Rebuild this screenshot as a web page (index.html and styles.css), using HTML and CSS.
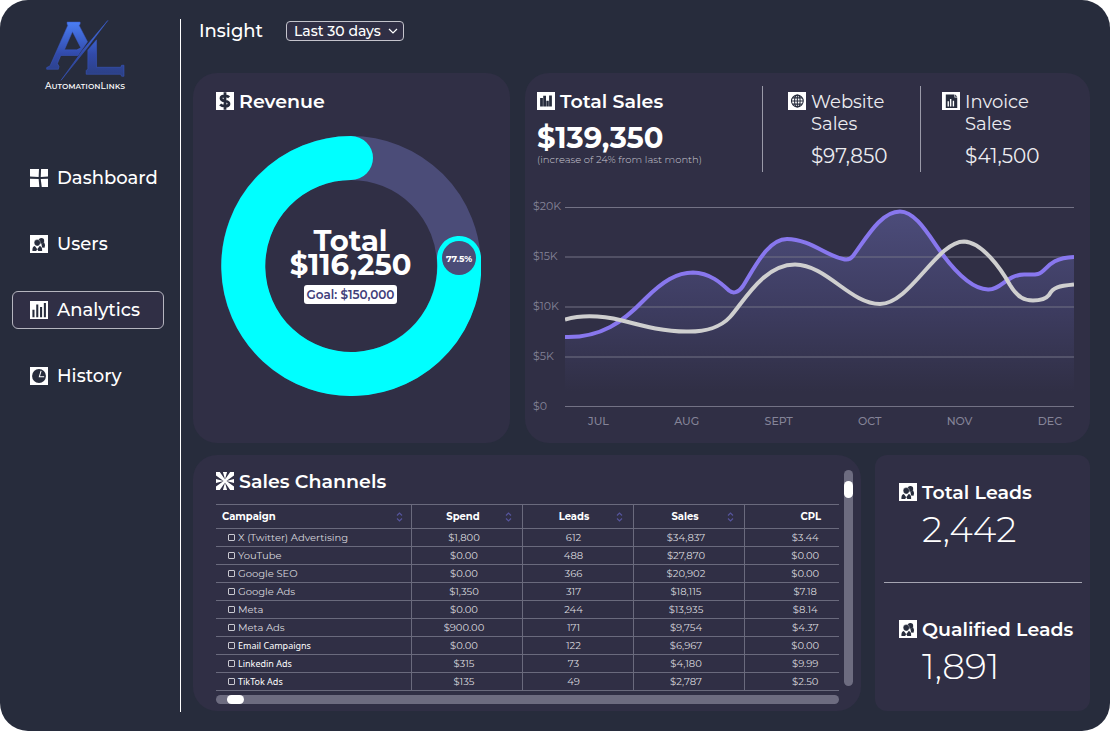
FILE: index.html
```html
<!DOCTYPE html>
<html lang="en">
<head>
<meta charset="utf-8">
<meta name="viewport" content="width=device-width, initial-scale=1">
<title>AutomationLinks Analytics</title>
<link rel="stylesheet" href="styles.css">
</head>
<body>
<svg class="sprite" aria-hidden="true">
  <symbol id="i-dashboard" viewBox="0 0 52 52"><path fill="#fff" d="M0 0H26L25 23 0 22ZM32 0H52V22L31 23ZM0 28L25 29 27 52H0ZM31 29L52 28V52H34Z"/></symbol>
  <symbol id="i-users" viewBox="0 0 52 52"><path fill="#fff" d="M0 0H52V52H0Z"/><g fill="#272c3c"><circle cx="33" cy="17" r="8"/><path d="M33 25L41 22Q46 30 42 37L35 36Z"/><path stroke="#fff" stroke-width="1" d="M21 13a9 9 0 0 1 9 9c0 6-4 10-9 10s-9-4-9-10a9 9 0 0 1 9-9Z"/><path d="M7 46Q6 34 14 32L21 41 28 32Q36 34 35 46H24L21 40 18 46Z"/></g></symbol>
  <symbol id="i-analytics" viewBox="0 0 52 52"><path fill="#fff" d="M0 0H52V52H0Z"/><path fill="#272c3c" d="M7 25h6v22H7ZM18 10h6v37H18ZM29 17h6v30H29ZM40 6h6v41H40Z"/></symbol>
  <symbol id="i-history" viewBox="0 0 52 52"><path fill="#fff" d="M0 0H52V52H0Z"/><circle cx="26" cy="26" r="20" fill="#272c3c"/><path d="M32 11L27 28H41" fill="none" stroke="#fff" stroke-width="3"/></symbol>
  <symbol id="i-dollar" viewBox="0 0 52 52"><path fill="#fff" d="M0 0H52V52H0Z"/><path d="M38 15Q34 11 26 11C10 11 11 24 26 26 42 28 41 41 26 41Q17 41 12 36M26 1V51" fill="none" stroke="#272c3c" stroke-width="8"/></symbol>
  <symbol id="i-bars" viewBox="0 0 52 52"><path fill="#fff" d="M0 0H52V52H0Z"/><path fill="#272c3c" d="M9 17h8v25H9ZM18 11h8v31H18ZM27 25h7v17H27ZM35 10h8v32H35Z"/></symbol>
  <symbol id="i-globe" viewBox="0 0 52 52"><path fill="#fff" d="M0 0H52V52H0Z"/><g fill="none" stroke="#272c3c" stroke-width="3"><circle cx="27" cy="26" r="17"/><ellipse cx="27" cy="26" rx="8" ry="17"/><path d="M27 9V43M10 26H44M13 17H41M13 35H41"/></g></symbol>
  <symbol id="i-invoice" viewBox="0 0 52 52"><path fill="#fff" d="M0 0H52V52H0Z"/><path fill="#272c3c" d="M11 7H36V16H44V46H11Z"/><path fill="#272c3c" d="M38 7L44 14H38Z"/><path fill="#fff" d="M16 27h4v15h-4ZM23 20h4v22h-4ZM31 25h4v17h-4Z"/></symbol>
  <symbol id="i-channels" viewBox="0 0 52 52"><path fill="#fff" d="M0 0H52V52H0Z"/><path fill="#302f45" d="M11 0H20L26 22ZM32 0H41L26 22ZM11 52H20L26 30ZM32 52H41L26 30ZM0 10V20L22 26ZM0 32V42L22 26ZM52 10V20L30 26ZM52 32V42L30 26Z"/></symbol>
  <symbol id="i-sort" viewBox="0 0 7 10"><path d="M1 3.500L3.500 1 6 3.500M1 6.500L3.500 9 6 6.500" fill="none" stroke="#55549c" stroke-width="1.200"/></symbol>
</svg>

<div class="app">
  <aside class="sidebar">
    <div class="brand">
      <svg class="brand-mark" viewBox="138 60 236 182" role="img" aria-label="AutomationLinks logo">
        <defs><linearGradient id="mark" gradientUnits="userSpaceOnUse" x1="0" y1="62" x2="0" y2="232"><stop offset="0" stop-color="#4b80f8"/><stop offset=".6" stop-color="#3149a8"/><stop offset="1" stop-color="#2b3f80"/></linearGradient></defs>
        <g fill="url(#mark)" stroke="#3a5bcb" stroke-width="1.500">
          <path fill-rule="evenodd" d="M201 66H240V72L237 76 262 125 233 166H182L172 190 177 199 175 207H140V202L150 197 203 76 201 72ZM217 95L193 149H230L242 143Z"/>
          <path d="M323 61L262 142 183 240 247 151Z"/>
          <path d="M289 119V201H361L364 195H371V228H364L361 222H258V211L263 206V150Z"/>
        </g>
      </svg>
      <span class="brand-name">AutomationLinks</span>
    </div>
    <nav class="nav" aria-label="Main">
      <a class="nav-item" href="#dashboard"><svg class="icon"><use href="#i-dashboard"/></svg>Dashboard</a>
      <a class="nav-item" href="#users"><svg class="icon"><use href="#i-users"/></svg>Users</a>
      <a class="nav-item active" href="#analytics" aria-current="page"><svg class="icon"><use href="#i-analytics"/></svg>Analytics</a>
      <a class="nav-item" href="#history"><svg class="icon"><use href="#i-history"/></svg>History</a>
    </nav>
  </aside>

  <main class="main">
    <header class="topbar">
      <label class="page-title" for="range">Insight</label>
      <span class="range">
        <select id="range"><option>Last 30 days</option><option>Last 90 days</option></select>
        <svg class="chevron" viewBox="0 0 10 8" aria-hidden="true"><path d="M1 2L5 6 9 2" fill="none" stroke="#fff" stroke-width="1.200"/></svg>
      </span>
    </header>

    <div class="row row-top">
      <section class="panel revenue">
        <h2 class="title"><svg class="icon"><use href="#i-dollar"/></svg>Revenue</h2>
        <div class="donut">
          <svg viewBox="0 0 260 260" role="img" aria-label="77.5% of the revenue goal">
            <circle cx="130" cy="130" r="108" fill="none" stroke="#4b4c78" stroke-width="44"/>
            <path d="M238 122A108 108 0 1 1 130 22" fill="none" stroke="#0ff" stroke-width="44" stroke-linecap="round"/>
            <circle cx="238" cy="122" r="17" fill="#4b4c78"/>
            <text class="donut-badge" x="238" y="126" text-anchor="middle">77.5%</text>
          </svg>
          <div class="donut-center">
            <p class="donut-total">Total<br>$116,250</p>
            <span class="goal">Goal: $150,000</span>
          </div>
        </div>
      </section>

      <section class="panel sales">
        <div class="stats">
          <div class="stat-main">
            <h2 class="title"><svg class="icon"><use href="#i-bars"/></svg>Total Sales</h2>
            <strong class="total">$139,350</strong>
            <small class="note">(increase of 24% from last month)</small>
          </div>
          <div class="stat stat-web">
            <svg class="icon"><use href="#i-globe"/></svg>
            <div><h3>Website Sales</h3><p>$97,850</p></div>
          </div>
          <div class="stat stat-inv">
            <svg class="icon"><use href="#i-invoice"/></svg>
            <div><h3>Invoice Sales</h3><p>$41,500</p></div>
          </div>
        </div>
        <div class="chart">
          <div class="y-axis"><span>$20K</span><span>$15K</span><span>$10K</span><span>$5K</span><span>$0</span></div>
          <svg class="plot" viewBox="0 0 509 200" role="img" aria-label="Sales from July to December">
            <defs><linearGradient id="fill" x1="0" y1="0" x2="0" y2="1"><stop offset="0" stop-color="#4c4c7a"/><stop offset=".5" stop-color="#3d3c60"/><stop offset=".92" stop-color="#302f45"/></linearGradient></defs>
            <path fill="url(#fill)" d="M0 130C36 131 58 115 80 92C98 74 112 65.500 128 65.500C145 66 156 76 164 83.500C168 87 173 86 178 79C190 60 203 32 222 32C244 32 262 49 278 52C282 53 285 53 288 49C302 30 316 4.500 335 4.500C351 4.500 364 29 378 48C390 64 407 82 423 82.500C436 83 441 68 459 67.500C464 67.500 469 68 473 67C482 65 482 51 509 50V200H0Z"/>
            <path d="M0 .5H509M0 50H509M0 100H509M0 150H509M0 199.500H509" stroke="#737285" stroke-width="1"/>
            <g fill="none" stroke-width="4">
              <path stroke="#8877ee" d="M0 130C36 131 58 115 80 92C98 74 112 65.500 128 65.500C145 66 156 76 164 83.500C168 87 173 86 178 79C190 60 203 32 222 32C244 32 262 49 278 52C282 53 285 53 288 49C302 30 316 4.500 335 4.500C351 4.500 364 29 378 48C390 64 407 82 423 82.500C436 83 441 68 459 67.500C464 67.500 469 68 473 67C482 65 482 51 509 50"/>
              <path stroke="#cfcfcf" d="M0 112.500C20 107 38 109 57 113.500C78 119 100 125 124 124.500C140 124.500 156 120 165 110C178 96 198 57.500 230 57.500C262 58 285 97 315 97C345 97 372 34.500 399 34.500C417 35 436 62 445 78C453 91 460 93.500 468 93.500C474 93.500 480 93 484 88C488 80 494 79 509 77.500"/>
            </g>
          </svg>
          <div class="x-axis"><span>JUL</span><span>AUG</span><span>SEPT</span><span>OCT</span><span>NOV</span><span>DEC</span></div>
        </div>
      </section>
    </div>

    <div class="row row-bottom">
      <section class="panel channels">
        <div class="channels-body">
          <h2 class="title"><svg class="icon"><use href="#i-channels"/></svg>Sales Channels</h2>
          <table class="table">
            <colgroup><col class="c-name"><col class="c-num"><col class="c-num"><col class="c-num"><col class="c-last"></colgroup>
            <thead><tr>
              <th scope="col"><button class="sort sort-first">Campaign<svg><use href="#i-sort"/></svg></button></th>
              <th scope="col"><button class="sort"><span>Spend</span><svg><use href="#i-sort"/></svg></button></th>
              <th scope="col"><button class="sort"><span>Leads</span><svg><use href="#i-sort"/></svg></button></th>
              <th scope="col"><button class="sort"><span>Sales</span><svg><use href="#i-sort"/></svg></button></th>
              <th scope="col" class="cpl">CPL</th>
            </tr></thead>
            <tbody>
              <tr><td><label><input type="checkbox">X (Twitter) Advertising</label></td><td>$1,800</td><td>612</td><td>$34,837</td><td>$3.44</td></tr>
              <tr><td><label><input type="checkbox">YouTube</label></td><td>$0.00</td><td>488</td><td>$27,870</td><td>$0.00</td></tr>
              <tr><td><label><input type="checkbox">Google SEO</label></td><td>$0.00</td><td>366</td><td>$20,902</td><td>$0.00</td></tr>
              <tr><td><label><input type="checkbox">Google Ads</label></td><td>$1,350</td><td>317</td><td>$18,115</td><td>$7.18</td></tr>
              <tr><td><label><input type="checkbox">Meta</label></td><td>$0.00</td><td>244</td><td>$13,935</td><td>$8.14</td></tr>
              <tr><td><label><input type="checkbox">Meta Ads</label></td><td>$900.00</td><td>171</td><td>$9,754</td><td>$4.37</td></tr>
              <tr><td><label class="alt"><input type="checkbox">Email Campaigns</label></td><td>$0.00</td><td>122</td><td>$6,967</td><td>$0.00</td></tr>
              <tr><td><label class="alt"><input type="checkbox">Linkedin Ads</label></td><td>$315</td><td>73</td><td>$4,180</td><td>$9.99</td></tr>
              <tr><td><label class="alt"><input type="checkbox">TikTok Ads</label></td><td>$135</td><td>49</td><td>$2,787</td><td>$2.50</td></tr>
            </tbody>
          </table>
          <div class="track track-x"><div class="thumb"></div></div>
        </div>
        <div class="track track-y"><div class="thumb"></div></div>
      </section>

      <section class="panel leads">
        <div class="lead">
          <h2 class="title"><svg class="icon"><use href="#i-users"/></svg>Total Leads</h2>
          <p>2,442</p>
        </div>
        <hr>
        <div class="lead">
          <h2 class="title"><svg class="icon"><use href="#i-users"/></svg>Qualified Leads</h2>
          <p>1,891</p>
        </div>
      </section>
    </div>
  </main>
</div>
</body>
</html>
```
FILE: styles.css
```css
* { box-sizing: border-box; margin: 0; padding: 0; }

body {
  background: #fff;
  color: #fff;
  font-family: Montserrat, Inter, "Liberation Sans", sans-serif;
}

button, select, input { font: inherit; color: inherit; }

.sprite { position: absolute; width: 0; height: 0; }

.app {
  display: flex;
  min-height: 100vh;
  background: #272c3c;
  border-radius: 28px;
  padding: 19px 20px 19px 0;
}

.icon { width: 18px; height: 18px; flex: none; }

/* Sidebar */
.sidebar {
  width: 181px;
  flex: none;
  border-right: 1px solid #fff;
}

.brand {
  display: flex;
  flex-direction: column;
  align-items: center;
  padding: 1px 10px 0 0;
}
.brand-mark { width: 79px; height: 61px; }
.brand-name {
  font-size: 9px;
  line-height: 9px;
  font-weight: 500;
  font-variant: small-caps;
}

.nav {
  display: flex;
  flex-direction: column;
  gap: 28px;
  padding: 69px 16px 0 12px;
}
.nav-item {
  display: flex;
  align-items: center;
  gap: 9px;
  height: 38px;
  padding: 0 17px;
  border: 1px solid transparent;
  border-radius: 6px;
  color: inherit;
  font-size: 18px;
  font-weight: 500;
  text-decoration: none;
}
.nav-item.active { background: #302f45; border-color: #b5b5bf; }

/* Main column */
.main {
  flex: 1;
  min-width: 0;
  display: flex;
  flex-direction: column;
  padding: 0 0 1px 12px;
}

.topbar {
  display: flex;
  align-items: center;
  gap: 23px;
  height: 24px;
  margin-bottom: 30px;
  padding-left: 6px;
}
.page-title { font-size: 18px; font-weight: 500; }
.range { position: relative; display: flex; }
.range select {
  width: 118px;
  height: 20px;
  padding: 0 7px;
  appearance: none;
  background: #302f45;
  border: 1px solid #c4c4cc;
  border-radius: 4px;
  font-size: 14px;
  font-weight: 500;
  line-height: 18px;
}
.chevron { position: absolute; right: 6px; top: 6px; width: 10px; height: 8px; pointer-events: none; }

.row { display: grid; }
.row-top { grid-template-columns: 317fr 565fr; gap: 15px; min-height: 370px; margin-bottom: 12px; }
.row-bottom { grid-template-columns: 668fr 215fr; gap: 14px; flex: 1; }

.panel { min-width: 0; background: #302f45; border-radius: 24px; }

.title {
  display: flex;
  align-items: flex-start;
  gap: 5px;
  font-size: 19px;
  line-height: 24px;
  font-weight: 600;
  white-space: nowrap;
}
.title .icon { margin-top: 2px; }

/* Revenue */
.revenue { padding: 17px 25px 17px 23px; }
.donut {
  display: grid;
  place-items: center;
  max-width: 260px;
  margin: 22px auto 0;
}
.donut > * { grid-area: 1 / 1; }
.donut svg { width: 100%; display: block; }
.donut-badge { fill: #fff; font-size: 9px; font-weight: 700; }
.donut-center { display: flex; flex-direction: column; align-items: center; }
.donut-total { font-size: 29px; line-height: 24px; font-weight: 700; text-align: center; }
.goal {
  margin-top: 8px;
  padding: 0 3px;
  background: #fff;
  border-radius: 3px;
  color: #41407a;
  font-size: 12px;
  line-height: 19px;
  font-weight: 600;
}

/* Total sales */
.sales { padding: 13px 16px 14px 8px; }
.stats { display: grid; grid-template-columns: 229fr 158fr 154fr; height: 86px; }
.stat-main { display: flex; flex-direction: column; align-items: flex-start; padding: 4px 0 0 4px; }
.total { font-size: 29px; line-height: 34px; margin-top: 7px; }
.note { font-size: 10px; line-height: 12px; margin-top: -1px; color: #c8c8d2; font-weight: 300; }
.stat { display: flex; gap: 5px; padding-top: 6px; border-left: 1px solid #9a9aa8; color: #ececf0; }
.stat-web { padding-left: 25px; }
.stat-inv { padding-left: 21px; padding-right: 32px; }
.stat h3 { font-size: 18px; line-height: 22px; font-weight: 400; margin-top: -1px; }
.stat p { font-size: 20px; line-height: 24px; font-weight: 400; margin-top: 9px; }

.chart {
  display: grid;
  grid-template-columns: 32px 1fr;
  margin-top: 35px;
  color: #858498;
  font-size: 11px;
}
.y-axis { display: flex; flex-direction: column; justify-content: space-between; line-height: 14px; margin: -8px 0 -6px; }
.plot { width: 100%; display: block; }
.x-axis {
  grid-column: 2;
  display: flex;
  justify-content: space-between;
  padding: 7px 12px 0 23px;
  line-height: 14px;
  font-weight: 500;
}

/* Sales channels */
.channels { display: flex; gap: 5px; padding: 15px 8px 6px 23px; }
.channels-body { flex: 1; min-width: 0; }
.table {
  width: 100%;
  margin-top: 10px;
  table-layout: fixed;
  border-collapse: collapse;
  font-size: 10px;
}
.c-name { width: 195px; }
.c-num { width: 111px; }
.c-last { width: 95px; }
.table tr { border-top: 1px solid #6a6a7d; border-bottom: 1px solid #6a6a7d; }
.table th, .table td { border-left: 1px solid #6a6a7d; }
.table th:first-child, .table td:first-child { border-left: 0; }
.table th { height: 24px; font-weight: 700; }
.table td { height: 18px; line-height: 12px; padding-right: 5px; text-align: center; color: #d8d8de; }
.table td:nth-child(3) { padding-right: 8px; }
.table td:first-child { padding-left: 12px; text-align: left; }
.table td:last-child { padding: 0 0 0 27px; }
.table .cpl { padding-left: 38px; }
.sort {
  display: flex;
  align-items: center;
  width: 100%;
  padding: 0 10px;
  background: none;
  border: 0;
  font-weight: 700;
  cursor: pointer;
}
.sort span { flex: 1; text-align: center; }
.sort svg { width: 7px; height: 10px; flex: none; }
.sort-first { justify-content: space-between; padding: 0 8px 0 6px; }
.table label { display: flex; align-items: center; gap: 3px; }
.table label.alt { font-family: "Noto Sans", "Open Sans", sans-serif; font-size: 9px; color: #fff; }
.table input {
  width: 7px;
  height: 7px;
  appearance: none;
  border: 1px solid #c8c8d0;
  border-radius: 1px;
}
.table input:checked { background: #fff; }

.track { display: flex; background: #6d6c80; border-radius: 5px; }
.track-x { height: 9px; margin-top: 4px; padding-left: 11px; }
.track-y { width: 9px; height: 216px; flex-direction: column; padding-top: 11px; }
.thumb { background: #fff; border-radius: 5px; }
.track-x .thumb { width: 17px; }
.track-y .thumb { height: 17px; }

/* Leads */
.leads { border-radius: 12px; padding: 26px 8px 24px 9px; }
.lead { padding-left: 15px; }
.lead p { padding-left: 23px; margin-top: 3px; font-size: 36px; line-height: 42px; font-weight: 300; }
.leads hr { margin: 32px 0 35px; border: 0; border-top: 1px solid #a5a5b2; }
```
